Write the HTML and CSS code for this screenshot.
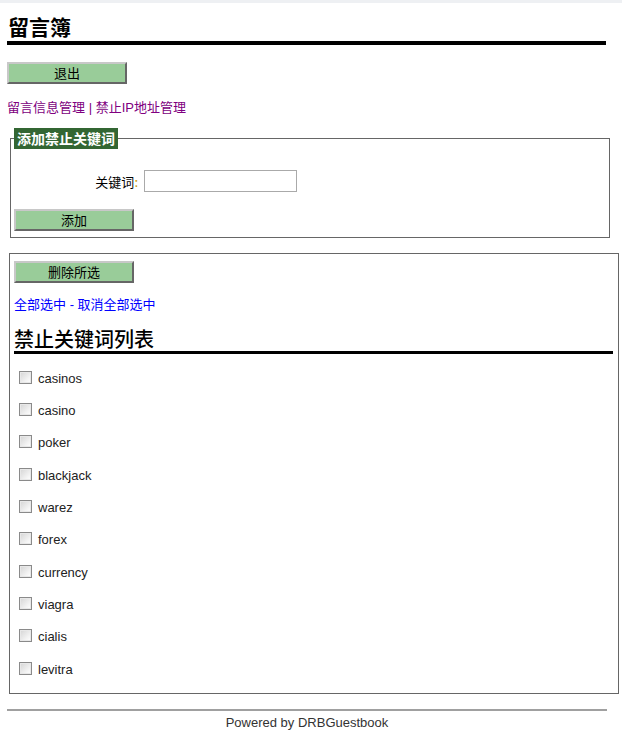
FILE: index.html
```html
<!DOCTYPE html>
<html lang="zh-CN">
<head>
<meta charset="utf-8">
<title>留言簿</title>
<link rel="stylesheet" href="styles.css">
</head>
<body>
<div class="topbar"></div>
<div class="page">
  <h1 class="title">留言簿</h1>
  <button class="btn" type="button">退出</button>
  <div class="nav"><a href="#">留言信息管理</a> | <a href="#">禁止IP地址管理</a></div>

  <fieldset class="addbox">
    <legend class="legend">添加禁止关键词</legend>
    <div class="field">
      <label class="field-label">关键词<span class="colon">:</span></label>
      <input class="field-input" type="text">
    </div>
    <button class="btn btn-add" type="button">添加</button>
  </fieldset>

  <div class="listbox">
    <button class="btn" type="button">删除所选</button>
    <div class="selects"><a href="#">全部选中</a> - <a href="#">取消全部选中</a></div>
    <h2 class="list-title">禁止关键词列表</h2>
    <ul class="words">
      <li class="word"><input type="checkbox" class="cb"><span>casinos</span></li>
      <li class="word"><input type="checkbox" class="cb"><span>casino</span></li>
      <li class="word"><input type="checkbox" class="cb"><span>poker</span></li>
      <li class="word"><input type="checkbox" class="cb"><span>blackjack</span></li>
      <li class="word"><input type="checkbox" class="cb"><span>warez</span></li>
      <li class="word"><input type="checkbox" class="cb"><span>forex</span></li>
      <li class="word"><input type="checkbox" class="cb"><span>currency</span></li>
      <li class="word"><input type="checkbox" class="cb"><span>viagra</span></li>
      <li class="word"><input type="checkbox" class="cb"><span>cialis</span></li>
      <li class="word"><input type="checkbox" class="cb"><span>levitra</span></li>
    </ul>
  </div>

  <div class="footer">
    <div class="footer-text">Powered by DRBGuestbook</div>
  </div>
</div>
</body>
</html>
```

FILE: styles.css
```css
html, body {
  margin: 0;
  padding: 0;
  background: #ffffff;
}
body {
  font-family: "Liberation Sans", Arial, "Noto Sans CJK SC", sans-serif;
  font-size: 13px;
  color: #000;
}
.topbar {
  height: 3px;
  background: #eef0f3;
}
.page {
  padding: 0 4px 0 7px;
  display: flex;
  flex-direction: column;
  align-items: flex-start;
}
.title {
  margin: 9px 0 0 0;
  width: 598px;
  padding: 0 0 1px 1px;
  font-family: "Noto Sans CJK SC", sans-serif;
  font-size: 21px;
  line-height: 28px;
  font-weight: bold;
  border-bottom: 4px solid #000;
}
.btn {
  box-sizing: border-box;
  width: 120px;
  height: 22px;
  margin: 17px 0 0 0;
  padding: 0;
  background: #99cc99;
  border-style: solid;
  border-width: 2px;
  border-color: #c8c8c8 #666 #666 #c8c8c8;
  font-family: "Noto Sans CJK SC", sans-serif;
  font-size: 13px;
  line-height: 16px;
  color: #000;
}
.nav {
  margin-top: 16px;
  line-height: 16px;
  color: #800080;
  font-family: "Liberation Sans", "Noto Sans CJK SC", sans-serif;
}
.nav a {
  color: #800080;
  text-decoration: none;
}
.addbox {
  box-sizing: border-box;
  width: 600px;
  margin: 12px 0 0 3px;
  padding: 0 3px 6px 3px;
  border: 1px solid #666;
  min-width: 0;
}
.legend {
  background: #336633;
  color: #fff;
  font-family: "Noto Sans CJK SC", sans-serif;
  font-weight: bold;
  font-size: 14px;
  line-height: 21px;
  padding: 0 3px;
}
.field {
  display: flex;
  align-items: center;
  gap: 6px;
  margin-top: 21px;
}
.field-label {
  width: 124px;
  text-align: right;
  font-family: "Noto Sans CJK SC", sans-serif;
  font-size: 13px;
}
.colon {
  color: #cc9900;
}
.field-input {
  box-sizing: border-box;
  width: 153px;
  height: 22px;
  border: 1px solid #aaa;
  margin: 0;
  padding: 0 3px;
}
.btn-add {
  display: block;
  margin-top: 17px;
}
.listbox {
  box-sizing: border-box;
  width: 610px;
  margin: 15px 0 0 2px;
  padding: 7px 4px 8px 4px;
  border: 1px solid #666;
}
.listbox .btn {
  margin-top: 0;
  display: block;
}
.selects {
  margin-top: 14px;
  line-height: 16px;
  color: #0000ff;
  font-family: "Liberation Sans", "Noto Sans CJK SC", sans-serif;
}
.selects a {
  color: #0000ff;
  text-decoration: none;
}
.list-title {
  margin: 14px 0 0 0;
  width: 599px;
  font-family: "Noto Sans CJK SC", sans-serif;
  font-size: 20px;
  font-weight: 500;
  line-height: 24px;
  border-bottom: 3px solid #000;
}
.words {
  list-style: none;
  margin: 8px 0 0 0;
  padding: 0;
}
.word {
  height: 32.33px;
  display: flex;
  align-items: center;
  gap: 6px;
  padding-left: 5px;
  color: #222;
  font-size: 13px;
}
.cb {
  appearance: none;
  -webkit-appearance: none;
  box-sizing: border-box;
  width: 13px;
  height: 13px;
  margin: 0 0 2px 0;
  border: 1px solid #8a8a8a;
  background: linear-gradient(135deg, #d4d4d4 0%, #f4f4f4 70%, #ffffff 100%);
  box-shadow: inset 0 0 0 1px #e8e8e8;
}
.footer {
  width: 600px;
  margin-top: 15px;
  border-top: 2px solid #a0a0a0;
}
.footer-text {
  margin-top: 4px;
  text-align: center;
  line-height: 16px;
  color: #333;
  font-size: 13px;
}
```
